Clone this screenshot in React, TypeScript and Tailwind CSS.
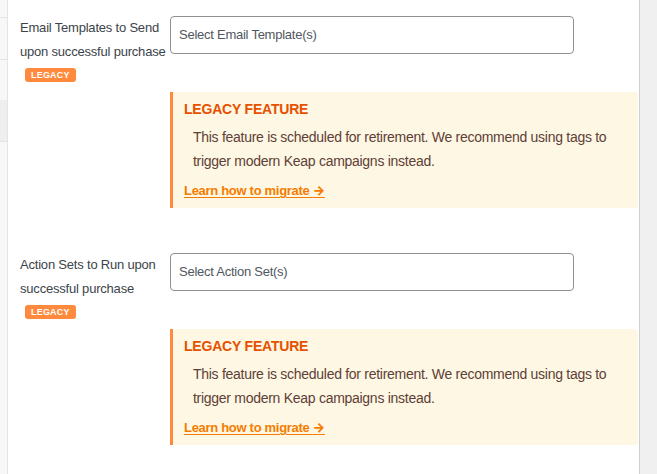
import React from 'react';

const font = { fontFamily: '"Liberation Sans", Arial, sans-serif' };

interface LegacyFieldProps {
  label: string;
  placeholder: string;
}

function LegacyBadge() {
  return (
    <span className="ml-[5px] inline-block rounded-[3px] bg-[#ff8a3d] px-[6px] pt-[1px] text-[9px] font-bold leading-[13px] tracking-[0.2px] text-white">
      LEGACY
    </span>
  );
}

function LegacyNotice() {
  return (
    <div className="mt-[38px] mr-[1px] rounded-r-[3px] border-l-[3px] border-[#ff8a3d] bg-[#fef7e3] pt-[8px] pb-[8px] pl-[11px]">
      <div className="text-[14px] font-bold leading-[18px] tracking-[-0.2px] text-[#e65100]">
        LEGACY FEATURE
      </div>
      <p className="mt-[8px] pl-[9px] text-[14px] leading-[23.5px] tracking-[-0.28px] text-[#5d4037]">
        This feature is scheduled for retirement. We recommend using tags to
        trigger modern Keap campaigns instead.
      </p>
      <a
        href="#"
        className="mt-[9px] block h-[18px] w-fit text-[13px] font-bold leading-[18px] tracking-[-0.3px] text-[#f57c00] underline underline-offset-2"
      >
        Learn how to migrate <span className="font-['Inter'] font-extrabold leading-none">→</span>
      </a>
    </div>
  );
}

function LegacyField({ label, placeholder }: LegacyFieldProps) {
  return (
    <div className="flex">
      <div className="w-[162px] shrink-0 pl-[12px] pr-[2px]">
        <div className="text-[13px] leading-[24px] tracking-[-0.2px] text-[#3c434a]">{label}</div>
        <div className="mt-[4px] flex">
          <LegacyBadge />
        </div>
      </div>
      <div className="flex-1">
        <div className="mr-[65px] flex h-[38px] items-center rounded-[4px] border border-[#8c8f94] bg-white px-[8px] text-[13px] tracking-[-0.25px] text-[#50575e]">
          {placeholder}
        </div>
        <LegacyNotice />
      </div>
    </div>
  );
}

export default function App() {
  return (
    <div className="flex h-[474px] w-[657px] overflow-hidden bg-white" style={font}>
      {/* Left rail */}
      <div className="flex w-[8px] shrink-0 flex-col border-r border-[#e4e4e4] bg-[#f7f7f7]">
        <div className="h-[18px] border-b border-[#e4e4e4]" />
        <div className="h-[42px] border-b border-[#e4e4e4]" />
        <div className="h-[40px]" />
        <div className="h-[41px] bg-[#eeeeee]" />
        <div className="flex-1 border-t border-[#e4e4e4]" />
      </div>

      {/* Main */}
      <div className="flex w-[631px] shrink-0 flex-col gap-[45px] pt-[16px]">
        <LegacyField label="Email Templates to Send upon successful purchase" placeholder="Select Email Template(s)" />
        <LegacyField label="Action Sets to Run upon successful purchase" placeholder="Select Action Set(s)" />
      </div>

      {/* Right rail */}
      <div className="flex-1 border-l border-[#cfcfcf] bg-[#f0f0f0]" />
    </div>
  );
}
